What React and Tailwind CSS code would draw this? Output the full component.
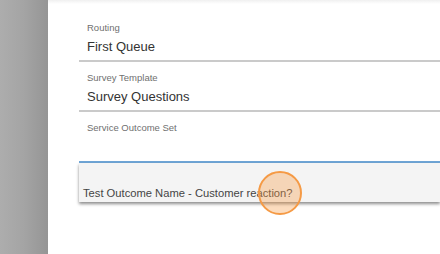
import React from "react";

const fields = [
    { label: "Routing", value: "First Queue" },
    { label: "Survey Template", value: "Survey Questions" },
];

const App = () => {
    return (
        <main className="relative flex h-[254px] w-[440px] overflow-hidden bg-white" style={{ fontFamily: '"Liberation Sans", Arial, sans-serif' }}>
            <div className="h-full w-[48px] shrink-0 bg-gradient-to-r from-[#adadad] via-[#a4a4a4] to-[#959595]"></div>
            <section className="flex-1 bg-white">
                <div className="h-[4px] bg-gradient-to-b from-[#f0f0f0] to-white"></div>
                <div className="ml-[31px] pt-[8px]">
                    {fields.map((f) => (
                        <div key={f.label} className="border-b-2 border-[#cacaca] pl-[8px] pt-[10px] pb-[5px]">
                            <p className="text-[9.5px] leading-[12px] text-[#6f6f6f]">{f.label}</p>
                            <p className="mt-[5px] text-[13px] leading-[16px] text-[#333]">{f.value}</p>
                        </div>
                    ))}
                    <div className="h-[51px] border-b-2 border-[#6fa5d6] pl-[8px] pt-[10px]">
                        <p className="text-[9.5px] leading-[12px] text-[#6f6f6f]">Service Outcome Set</p>
                    </div>
                    <ul className="relative bg-[#f4f4f4] shadow-[0_2px_3px_rgba(0,0,0,0.45)]">
                        <li className="h-[20px]"></li>
                        <li className="h-[19px] pl-[4px] text-[11.2px] leading-[20px] text-[#444]">Test Outcome Name - Customer reaction?</li>
                    </ul>
                </div>
            </section>
            <div className="absolute left-[258px] top-[171px] h-[44px] w-[44px] rounded-full border-2 border-[#f59a45] bg-[#f59a45]/35"></div>
        </main>
    );
};

export default App;
